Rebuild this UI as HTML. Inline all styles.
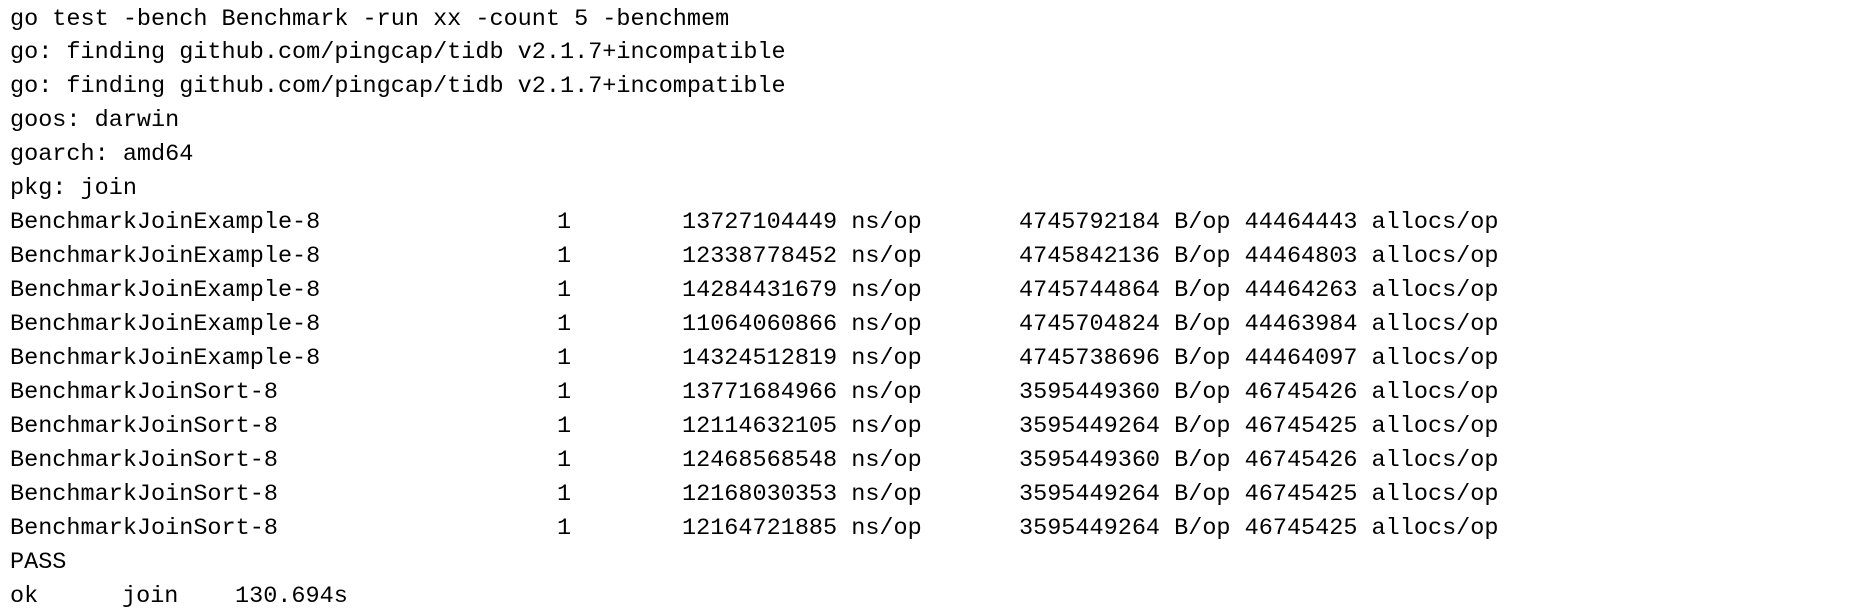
<!DOCTYPE html>
<html><head><meta charset="utf-8"><style>
html,body{margin:0;padding:0;background:#fff;width:1856px;height:612px;overflow:hidden}
.l{position:absolute;left:10px;height:34px;line-height:34px;font-family:"Liberation Mono",monospace;font-size:23.5px;color:#000;white-space:pre}
.a{position:absolute;top:0}
</style></head><body>
<div id="rows"></div>
<script>
var pre=["go test -bench Benchmark -run xx -count 5 -benchmem",
"go: finding github.com/pingcap/tidb v2.1.7+incompatible",
"go: finding github.com/pingcap/tidb v2.1.7+incompatible",
"goos: darwin","goarch: amd64","pkg: join"];
var d=[["BenchmarkJoinExample-8","13727104449","4745792184","44464443"],
["BenchmarkJoinExample-8","12338778452","4745842136","44464803"],
["BenchmarkJoinExample-8","14284431679","4745744864","44464263"],
["BenchmarkJoinExample-8","11064060866","4745704824","44463984"],
["BenchmarkJoinExample-8","14324512819","4745738696","44464097"],
["BenchmarkJoinSort-8","13771684966","3595449360","46745426"],
["BenchmarkJoinSort-8","12114632105","3595449264","46745425"],
["BenchmarkJoinSort-8","12468568548","3595449360","46745426"],
["BenchmarkJoinSort-8","12168030353","3595449264","46745425"],
["BenchmarkJoinSort-8","12164721885","3595449264","46745425"]];
function T(i){return 2.5+i*33.95;}
var h="";
for(var i=0;i<pre.length;i++)h+='<div class="l" style="top:'+T(i)+'px">'+pre[i]+'</div>';
for(var i=0;i<d.length;i++){var r=d[i];
h+='<div class="l" style="top:'+T(6+i)+'px;left:0;width:1856px">'+
'<span class="a" style="left:10px">'+r[0]+'</span>'+
'<span class="a" style="left:557px">1</span>'+
'<span class="a" style="left:682px">'+r[1]+' ns/op</span>'+
'<span class="a" style="left:1019px">'+r[2]+' B/op '+r[3]+' allocs/op</span></div>';}
h+='<div class="l" style="top:'+T(16)+'px">PASS</div>';
h+='<div class="l" style="top:'+T(17)+'px;left:0;width:600px"><span class="a" style="left:10px">ok</span><span class="a" style="left:122px">join</span><span class="a" style="left:235px">130.694s</span></div>';
document.getElementById("rows").innerHTML=h;
</script>
</body></html>
